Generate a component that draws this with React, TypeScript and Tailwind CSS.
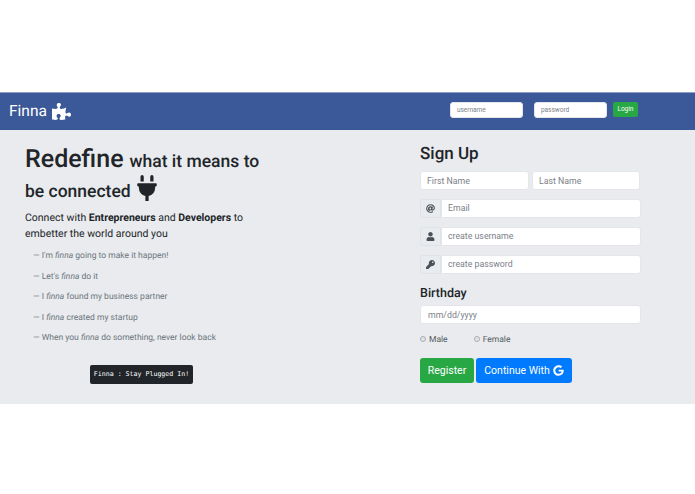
import { FaAt, FaGoogle, FaKey, FaPlug, FaPuzzlePiece, FaUser } from "react-icons/fa";

const sayings = [
  ["I'm ", "finna", " going to make it happen!"],
  ["Let's ", "finna", " do it"],
  ["I ", "finna", " found my business partner"],
  ["I ", "finna", " created my startup"],
  ["When you ", "finna", " do something, never look back"],
];

const inputClass =
  "min-w-0 bg-white rounded-[3px] border border-[#e4e6ea] text-[8.75px] text-[#495057] placeholder:text-[#7b8188] outline-none";

const radioClass = "mb-[3px] h-[6px] w-[6px] appearance-none rounded-full border border-[#a9adb1] bg-[#e2e3e5]";

function IconInput({ icon, placeholder }: { icon: React.ReactNode; placeholder: string }) {
  return (
    <div className="flex h-[19px] w-[221px]">
      <div className="flex w-[21px] items-center justify-center rounded-l-[3px] border border-[#dfe2e6] bg-[#e9ecef] text-[#495057]">
        {icon}
      </div>
      <input placeholder={placeholder} className={`${inputClass} flex-1 rounded-l-none pl-[6px]`} />
    </div>
  );
}

export default function App() {
  return (
    <div className="h-[494px] bg-white pt-[92px] font-['Roboto',sans-serif] text-[#212529] [text-rendering:geometricPrecision]">
      <nav className="flex h-[38px] items-center border-t border-[#8d9fc2] bg-[#3b5998] pl-[9px]">
        <span className="text-[15.5px] leading-none text-white">Finna</span>
        <FaPuzzlePiece className="ml-[5px] text-[19px] text-white" />
        <div className="mb-[4px] ml-[379px] flex items-center">
          <input placeholder="username" className={`${inputClass} h-[16px] w-[73px] pl-[6px] !text-[6.5px]`} />
          <input placeholder="password" className={`${inputClass} ml-[11px] h-[16px] w-[73px] pl-[6px] !text-[6.5px]`} />
          <button className="ml-[6px] h-[15px] w-[25px] rounded-[2px] bg-[#28a745] text-[6.5px] text-white">Login</button>
        </div>
      </nav>

      <main className="flex h-[274px] bg-[#e9ebee]">
        <section className="w-[420px] pl-[25px]">
          <h1 className="mt-[15px] flex items-baseline text-[25px] font-medium leading-[30px]">
            Redefine
            <span className="ml-[6px] text-[17.5px]">what it means to</span>
          </h1>
          <h2 className="mt-[1px] flex items-center text-[17.5px] font-medium leading-[28px]">
            be connected
            <FaPlug className="-mt-[8px] ml-[3px] text-[26px]" />
          </h2>
          <p className="mt-[4px] w-[240px] text-[10.5px] leading-[16px]">
            Connect with <b>Entrepreneurs</b> and <b>Developers</b> to embetter the world around you
          </p>
          <ul className="ml-[8px] mt-[7px] flex flex-col gap-[6.5px] text-[8.5px] leading-[14px] text-[#6c757d]">
            {sayings.map(([before, word, after]) => (
              <li key={before + after}>
                — {before}
                <i>{word}</i>
                {after}
              </li>
            ))}
          </ul>
          <div className="ml-[65px] mt-[20px] flex h-[19px] w-[103px] items-center justify-center whitespace-nowrap rounded-[2px] bg-[#212529] font-['DejaVu_Sans_Mono',monospace] text-[6.6px] text-white">
            Finna : Stay Plugged In!
          </div>
        </section>

        <section className="flex flex-col">
          <h3 className="mt-[12px] text-[17px] font-medium leading-[24px]">Sign Up</h3>
          <div className="mt-[5px] flex gap-[3px]">
            <input placeholder="First Name" className={`${inputClass} h-[19px] w-[109px] pl-[6px]`} />
            <input placeholder="Last Name" className={`${inputClass} h-[19px] w-[108px] pl-[6px]`} />
          </div>
          <div className="mt-[9px] flex flex-col gap-[9px]">
            <IconInput icon={<FaAt className="text-[9px]" />} placeholder="Email" />
            <IconInput icon={<FaUser className="text-[9px]" />} placeholder="create username" />
            <IconInput icon={<FaKey className="text-[9px]" />} placeholder="create password" />
          </div>
          <h4 className="mt-[11px] text-[12.5px] font-medium leading-[18px]">Birthday</h4>
          <input placeholder="mm/dd/yyyy" className={`${inputClass} mt-[2px] h-[19px] w-[221px] pl-[7px]`} />
          <div className="mt-[10px] flex items-center text-[8.5px] leading-[12px] text-[#555b61]">
            <input type="radio" className={radioClass} />
            <span className="ml-[3px]">Male</span>
            <input type="radio" className={`${radioClass} ml-[26px]`} />
            <span className="ml-[3px]">Female</span>
          </div>
          <div className="mt-[12px] flex gap-[2px]">
            <button className="h-[25px] w-[54px] rounded-[3px] bg-[#28a745] text-[10.5px] text-white">Register</button>
            <button className="flex h-[25px] w-[96px] items-center justify-center gap-[3px] rounded-[3px] bg-[#007bff] text-[10.5px] text-white">
              Continue With <FaGoogle className="text-[11px]" />
            </button>
          </div>
        </section>
      </main>
    </div>
  );
}
